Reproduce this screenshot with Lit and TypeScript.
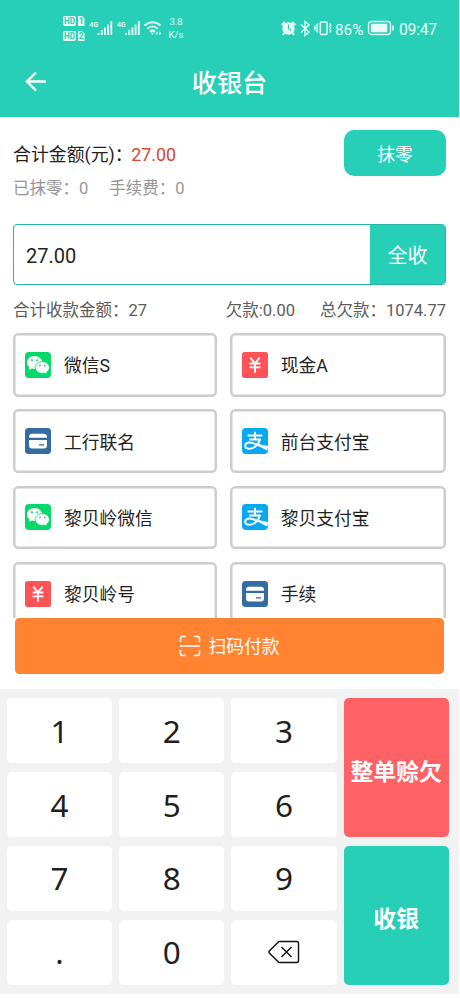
import { LitElement, html, css, svg } from "lit";
import { customElement, property } from "lit/decorators.js";

type Kind = "wechat" | "cash" | "card" | "alipay";

const METHODS: { kind: Kind; name: string }[] = [
  { kind: "wechat", name: "微信S" },
  { kind: "cash", name: "现金A" },
  { kind: "card", name: "工行联名" },
  { kind: "alipay", name: "前台支付宝" },
  { kind: "wechat", name: "黎贝岭微信" },
  { kind: "alipay", name: "黎贝支付宝" },
  { kind: "cash", name: "黎贝岭号" },
  { kind: "card", name: "手续" },
];

const GLYPHS = {
  wechat: svg`
    <rect width="26" height="26" rx="4" fill="#07d86b"/>
    <path fill="#fff" d="M9.600 4C5.400 4 2 6.900 2 10.500c0 2 1 3.700 2.700 4.900L4 18l2.900-1.500c.9.3 1.800.4 2.700.4C13.900 16.900 17.200 14 17.200 10.500S13.900 4 9.600 4z"/>
    <path fill="#fff" stroke="#07d86b" stroke-width=".8" d="M17.400 9.600c-3.900 0-7.100 2.600-7.100 5.900s3.200 5.900 7.100 5.900c.8 0 1.500-.1 2.200-.3l2.600 1.400-.6-2.300c1.800-1.100 2.800-2.800 2.800-4.700 0-3.300-3.100-5.900-7-5.900z"/>
    <circle cx="7" cy="8.200" r="1" fill="#07d86b"/><circle cx="12.200" cy="8.200" r="1" fill="#07d86b"/>
    <circle cx="15" cy="13.600" r=".9" fill="#07d86b"/><circle cx="19.700" cy="13.600" r=".9" fill="#07d86b"/>`,
  cash: svg`
    <rect width="26" height="26" rx="2.500" fill="#ff5357"/>
    <path fill="none" stroke="#fff" stroke-width="1.900" d="M8.300 5.700l4.700 5.600 4.700-5.600M7.600 11.500h10.800M7.600 15.400h10.800M13 11v9.800"/>`,
  card: svg`
    <rect width="26" height="26" rx="3.500" fill="#356ba3"/>
    <path fill="#fff" d="M4 9.800V8.600A3 3 0 0 1 7 5.700h12a3 3 0 0 1 3 2.900v1.200zM4 11.900h18v5.600a3 3 0 0 1-3 2.900H7a3 3 0 0 1-3-2.900z"/>
    <path stroke="#356ba3" stroke-width="1.300" d="M14 16.900h5"/>`,
  alipay: svg`
    <rect width="26" height="26" rx="4" fill="#06a9f1"/>
    <path fill="none" stroke="#fff" stroke-width="2" d="M5.600 7.500h14.800M13 3.800v7.700M7.200 11.400h11.600"/>
    <path fill="none" stroke="#fff" stroke-width="2" d="M18 11.200c-1.500 5.200-5.500 9.500-10.300 9.500-3 0-4.500-1.300-4.500-3 0-1.900 1.900-3.200 4.400-3.100 2.500.1 5.400 1.200 8.600 2.700"/>
    <path fill="#fff" d="M15.800 15.200c3 1.300 6.300 2.200 10.200 2.900l-.6 4.400c-3.700-1.600-7.700-3.600-10.900-5.400z"/>`,
};

@customElement("pay-method")
class PayMethod extends LitElement {
  @property() kind: Kind = "wechat";
  @property() name = "";

  static styles = css`
    :host {
      display: flex;
      align-items: center;
      box-sizing: border-box;
      border: 2px solid #cdcdcd;
      box-shadow: inset 0 0 0 0.5px #cdcdcd;
      border-radius: 5.500px;
      background: #fff;
      padding: 0 0 0 10.400px;
      font-size: 17.800px;
      line-height: 24px;
      color: #1f1f1f;
    }
    .icon { width: 26px; height: 26px; margin-right: 12.600px; flex: none; }
    .name { padding-top: 3px; }
  `;

  render() {
    return html`<svg class="icon" viewBox="0 0 26 26">${GLYPHS[this.kind]}</svg>
      <span class="name">${this.name}</span>`;
  }
}

@customElement("status-bar")
class StatusBar extends LitElement {
  static styles = css`
    :host { display: flex; height: 56px; box-sizing: border-box; padding: 14px 0 0 62px; color: #e6fbf7; }
    svg { flex: none; fill: none; stroke: #e6fbf7; }
    .speed { font-size: 9.500px; line-height: 12.500px; width: 20px; text-align: center; margin: 2px 0 0 1px; }
    .right { margin-left: 93px; display: flex; }
    .pct, .time { line-height: 20px; margin-top: 6px; }
    .pct { width: 31px; font-size: 15.300px; margin-left: 2px; }
    .time { font-size: 15.800px; margin-left: 5px; letter-spacing: -0.3px; white-space: nowrap; }
    .tiny { font: bold 8.500px Roboto, sans-serif; fill: #25cfb5; stroke: none; }
    .net { font: bold 8px Roboto, sans-serif; fill: #e6fbf7; stroke: none; }
  `;

  render() {
    const sim = (y: number, n: string) => svg`
      <rect x="1" y=${y} width="13" height="10" rx="2" fill="#e6fbf7" stroke="none"/>
      <text class="tiny" x="2" y=${y + 8} textLength="11" lengthAdjust="spacingAndGlyphs">HD</text>
      <path d="M16 ${y}h4l2.500 2.500V${y + 10}H16z" fill="#e6fbf7" stroke="none"/>
      <text class="tiny" x="16.800" y=${y + 8}>${n}</text>`;
    const signal = (x: number) => svg`
      <text class="net" x=${x} y="13" textLength="8.500" lengthAdjust="spacingAndGlyphs">4G</text>
      <path stroke-width="1.900" d="M${x + 9} 21v-2M${x + 12.200} 21v-5M${x + 15.400} 21v-7.500M${x + 18.600} 21V10.500M${x + 21.800} 21V7"/>`;
    return html`
      <svg width="103" height="30" viewBox="0 0 103 30">
        ${sim(2, "1")}${sim(17, "2")}${signal(27.500)}${signal(55)}
        <path stroke-width="2" d="M82.500 11.500c4.800-4.500 11.200-4.500 16 0M85.300 14.800c3.100-3 7.300-3 10.400 0M88 17.800c1.500-1.400 3.500-1.400 5 0"/>
        <path fill="#e6fbf7" stroke="none" d="M88.700 18.800h3.600L90.500 21zM95.500 17.200v4l-2-2zM97.300 17.200v4l2-2z"/>
      </svg>
      <div class="speed">3.8<br />K/s</div>
      <div class="right">
        <svg width="54" height="30" viewBox="0 0 54 30">
          <circle cx="9.500" cy="14.500" r="6.200" fill="#e6fbf7" stroke="none"/>
          <path stroke-width="1.900" d="M2.700 11l3.200-3M13.100 8l3.200 3M5.400 19l-1.500 2M13.600 19l1.500 2"/>
          <path stroke="#25cfb5" stroke-width="1.200" d="M9.500 10.500v4l2.500 2"/>
          <path stroke-width="1.400" d="M22 10.500l8 7.500-4 3.500v-14l4 3.500-8 7.500"/>
          <rect x="41.300" y="8" width="6.800" height="12.500" rx="1.200" stroke-width="1.500"/>
          <path stroke-width="1.300" d="M38.600 9.500l-1 1.500 1 1.500-1 1.500 1 1.500-1 1.500 1 1.500M36.200 11.500l-.7 1.200.7 1.200-.7 1.200.7 1.200M50.700 9.500l1 1.500-1 1.500 1 1.500-1 1.500 1 1.500-1 1.500"/>
        </svg>
        <span class="pct">86%</span>
        <svg width="28" height="30" viewBox="0 0 28 30">
          <rect x="2.500" y="7.500" width="22" height="13" rx="3" stroke-width="1.300"/>
          <rect x="4.800" y="9.800" width="16.500" height="8.400" rx="1" fill="#e6fbf7" stroke="none"/>
          <path stroke-width="1.600" d="M27 11.500v5"/>
        </svg>
        <span class="time">09:47</span>
      </div>`;
  }
}

@customElement("app-root")
class AppRoot extends LitElement {
  static styles = css`
    :host {
      display: flex;
      flex-direction: column;
      width: 459px;
      height: 998px;
      overflow: hidden;
      background: #fff;
      font-family: Roboto, "Noto Sans CJK SC", sans-serif;
      color: #1f1f1f;
    }
    .head { height: 117px; flex: none; background: #26cfb6; }
    .nav { display: grid; grid-template-columns: 72px 1fr 72px; align-items: center; height: 52px; }
    .back { width: 24px; height: 24px; margin-left: 24px; fill: none; stroke: #fff; stroke-width: 2.400; }
    .title { text-align: center; color: #fff; font-size: 25.200px; line-height: 32px; font-weight: 500; padding-top: 3px; }
    .main { box-sizing: border-box; padding: 13px 13px 0; height: 559px; flex: none; }
    .summary { display: flex; justify-content: space-between; height: 94px; }
    .total { display: flex; font-size: 17.900px; line-height: 24px; margin-top: 13px; white-space: pre; }
    .red { color: #d9452f; margin-left: -1.500px; }
    .sub { display: flex; font-size: 16.500px; line-height: 22px; margin-top: 11px; color: #969696; }
    .fee { margin-left: 21px; }
    .round { width: 102px; height: 46px; border-radius: 10px; background: #26cfb6; color: #fff; font-size: 17.800px; line-height: 50px; text-align: center; }
    .entry { display: flex; height: 61px; box-sizing: border-box; border: 1px solid #26b7a0; border-radius: 4px; overflow: hidden; }
    .value { flex: 1; padding-left: 12px; font-size: 20px; line-height: 62px; }
    .all { width: 75px; background: #26cfb6; color: #fff; font-size: 20px; line-height: 63px; text-align: center; }
    .sums { display: flex; font-size: 16.500px; line-height: 22px; padding-top: 15px; height: 33px; color: #5c5c5c; white-space: nowrap; }
    .owed { margin-left: auto; }
    .debt { margin-left: 25px; }
    .methods {
      display: grid;
      grid-template-columns: 203.700px 216.600px;
      grid-auto-rows: 63.600px;
      gap: 12.750px 13px;
      height: 285px;
      overflow: hidden;
    }
    .scan {
      display: flex; align-items: center; justify-content: center;
      height: 56px; margin: 0 2.300px; border-radius: 4.500px;
      background: #ff8330; color: #fff; font-size: 17.800px; line-height: 24px;
    }
    .scan span { padding-top: 2px; }
    .scan svg { width: 22px; height: 22px; margin-right: 7px; fill: none; stroke: #fff; stroke-width: 1.500; }
    .pad {
      display: grid;
      grid-template-columns: repeat(4, 105.200px);
      grid-template-rows: repeat(4, 64.700px);
      gap: 9.200px 7px;
      height: 305px; box-sizing: border-box; flex: none;
      margin-top: 13px;
      padding: 9.300px 7px 0;
      background: #f2f2f2;
    }
    .key { display: flex; align-items: center; justify-content: center; background: #fff; border-radius: 5px; font: 31.500px/40px "Noto Sans", sans-serif; box-sizing: border-box; }
    .key svg { width: 32px; height: 26px; fill: none; stroke: #111; stroke-width: 1.400; }
    .credit, .collect { grid-column: 4; display: flex; align-items: center; justify-content: center; color: #fff; border-radius: 5px; font-size: 22.800px; font-weight: 700; padding-top: 5px; white-space: nowrap; }
    .credit { grid-row: 1 / 3; background: #ff6264; }
    .collect { grid-row: 3 / 5; background: #26cfb6; }
  `;

  render() {
    const keys = ["1", "2", "3", "4", "5", "6", "7", "8", "9", ".", "0"];
    return html`
      <div class="head">
        <status-bar></status-bar>
        <div class="nav">
          <svg class="back" viewBox="0 0 24 24"><path d="M22 11.500H3.500M12 2.500l-9 9 9 9"/></svg>
          <div class="title">收银台</div>
        </div>
      </div>
      <div class="main">
        <div class="summary">
          <div>
            <div class="total">合计金额(元)：<span class="red">27.00</span></div>
            <div class="sub"><span>已抹零：0</span><span class="fee">手续费：0</span></div>
          </div>
          <div class="round">抹零</div>
        </div>
        <div class="entry"><div class="value">27.00</div><div class="all">全收</div></div>
        <div class="sums">
          <span>合计收款金额：27</span><span class="owed">欠款:0.00</span><span class="debt">总欠款：1074.77</span>
        </div>
        <div class="methods">
          ${METHODS.map((m) => html`<pay-method kind=${m.kind} name=${m.name}></pay-method>`)}
        </div>
        <div class="scan">
          <svg viewBox="0 0 22 22"><path d="M1.500 7V3.500a2 2 0 0 1 2-2H7M15 1.500h3.500a2 2 0 0 1 2 2V7M20.500 15v3.500a2 2 0 0 1-2 2H15M7 20.500H3.500a2 2 0 0 1-2-2V15M1 11h20"/></svg>
          <span>扫码付款</span>
        </div>
      </div>
      <div class="pad">
        <div class="credit">整单赊欠</div>
        <div class="collect">收银</div>
        ${keys.map((k) => html`<div class="key">${k}</div>`)}
        <div class="key">
          <svg viewBox="0 0 32 26"><path d="M11 2.500h17.500a2 2 0 0 1 2 2v17a2 2 0 0 1-2 2H11L1.500 14.200a1.700 1.700 0 0 1 0-2.400zM13.500 8l10 10M23.500 8l-10 10"/></svg>
        </div>
      </div>`;
  }
}
